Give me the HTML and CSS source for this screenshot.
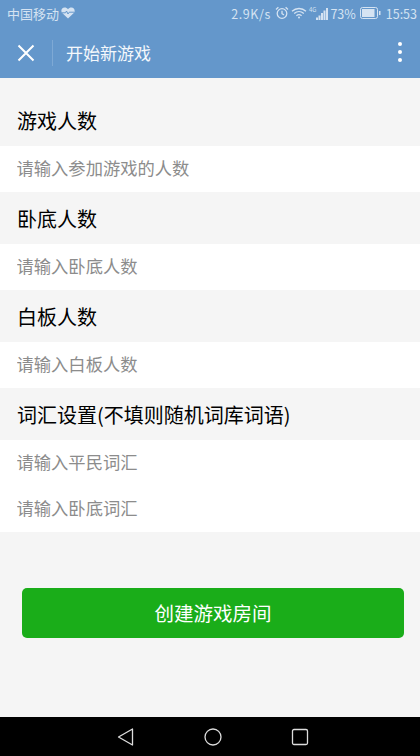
FILE: index.html
```html
<!DOCTYPE html>
<html lang="zh-CN">
<head>
<meta charset="UTF-8">
<meta name="viewport" content="width=device-width, initial-scale=1.0">
<title>开始新游戏</title>
<link rel="stylesheet" href="styles.css">
</head>
<body>

<!-- Header with status bar -->
<div class="header">
    <div class="status-bar">
        <div class="status-left">
            <span>中国移动</span>
            <svg class="heart" viewBox="0 0 14 12" width="14" height="12"><path d="M7 11.500 1.200 6C-.6 4 .6.6 3.600.6 5 .6 6.200 1.300 7 2.300 7.800 1.300 9 .6 10.400.6c3 0 4.200 3.400 2.400 5.400Z" fill="#d5e3f2"/><path d="M1 5.800h3.500l1-1.800 1.500 3 1.200-1.800h4.800" fill="none" stroke="#6497cb" stroke-width="1"/></svg>
        </div>
        <div class="status-right">
            <span class="speed">2.9K/s</span>
            <svg class="alarm" viewBox="0 0 14 14" width="14" height="14" fill="none" stroke="#d5e3f2" stroke-width="1.300"><circle cx="7" cy="7.500" r="4.800"/><path d="M7 4.800v2.900l2 1.200M1 3.400 3.400 1.200M13 3.400 10.600 1.200"/></svg>
            <svg class="wifi" viewBox="0 0 16 12" width="16" height="12" fill="none" stroke="#d5e3f2" stroke-width="1.300"><path d="M1 4.200c4-3.600 10-3.600 14 0M3.200 6.500c2.800-2.400 6.800-2.400 9.600 0M5.400 8.700c1.500-1.200 3.700-1.200 5.200 0"/><circle cx="8" cy="10.500" r="1" fill="#d5e3f2" stroke="none"/></svg>
            <div class="signal">
                <span class="net">4G</span>
                <svg viewBox="0 0 12 12" width="12" height="12" fill="#d5e3f2"><rect x="0" y="9.500" width="2" height="2.500"/><rect x="2.500" y="7.500" width="2" height="4.500"/><rect x="5" y="5" width="2" height="7"/><rect x="7.500" y="2.500" width="2" height="9.500"/><rect x="10" y="0" width="2" height="12"/></svg>
            </div>
            <span class="percent">73%</span>
            <svg class="battery" viewBox="0 0 21 12" width="21" height="12"><rect x=".5" y=".5" width="17" height="11" rx="2" fill="none" stroke="#d5e3f2"/><rect x="2" y="2" width="12.500" height="8" fill="#d5e3f2"/><rect x="19" y="4" width="1.500" height="4" fill="#d5e3f2"/></svg>
            <span class="clock">15:53</span>
        </div>
    </div>
    <div class="title-bar">
        <svg class="close" viewBox="0 0 18 18" width="18" height="18" fill="none" stroke="#fff" stroke-width="2"><path d="M1.500 1.500l15 15M16.500 1.500l-15 15"/></svg>
        <div class="divider"></div>
        <div class="title">开始新游戏</div>
        <div class="more"><i></i><i></i><i></i></div>
    </div>
</div>

<!-- Form -->
<div class="form">
    <h3 class="first">游戏人数</h3>
    <div class="group"><input type="text" placeholder="请输入参加游戏的人数"></div>
    <h3>卧底人数</h3>
    <div class="group"><input type="text" placeholder="请输入卧底人数"></div>
    <h3>白板人数</h3>
    <div class="group"><input type="text" placeholder="请输入白板人数"></div>
    <h3>词汇设置(不填则随机词库词语)</h3>
    <div class="group">
        <input type="text" placeholder="请输入平民词汇">
        <input type="text" placeholder="请输入卧底词汇">
    </div>
</div>

<button class="create-button">创建游戏房间</button>

<!-- Android nav bar -->
<div class="nav-bar">
    <svg viewBox="0 0 18 18" width="18" height="18" fill="none" stroke="#ddd" stroke-width="1.300"><path d="M15.500 1 1.500 9l14 8Z" stroke-linejoin="round"/></svg>
    <svg viewBox="0 0 18 18" width="18" height="18" fill="none" stroke="#ddd" stroke-width="1.300"><circle cx="9" cy="9" r="8"/></svg>
    <svg viewBox="0 0 18 18" width="18" height="18" fill="none" stroke="#ddd" stroke-width="1.300"><rect x="1.500" y="1.500" width="15" height="15" rx="1.500"/></svg>
</div>

</body>
</html>
```

FILE: styles.css
```css
* {
    box-sizing: border-box;
    margin: 0;
    padding: 0;
    font-family: "Noto Sans CJK SC", "Liberation Sans", sans-serif;
}

body {
    width: 420px;
    height: 756px;
    background-color: #f5f5f5;
    display: flex;
    flex-direction: column;
    overflow: hidden;
}

.header {
    height: 78px;
    background-color: #6497cb;
}

.status-bar {
    height: 28px;
    display: flex;
    justify-content: space-between;
    align-items: center;
    padding: 0 3px 2px 7px;
    color: #d5e3f2;
    font-size: 13px;
}

.status-left,
.status-right {
    display: flex;
    align-items: center;
}

.status-left {
    gap: 2px;
}

.status-right {
    font-family: Roboto, sans-serif;
    font-size: 12.500px;
}

.speed {
    letter-spacing: 0.6px;
}

.alarm {
    margin-left: 4px;
}

.wifi {
    margin-left: 2px;
}

.signal {
    display: flex;
    align-items: flex-end;
    height: 14px;
    margin-left: 2px;
}

.net {
    font-size: 6px;
    line-height: 8px;
    align-self: flex-start;
}

.percent {
    margin-left: 2px;
}

.battery {
    margin-left: 4px;
}

.clock {
    margin-left: 5px;
}

.title-bar {
    height: 50px;
    display: flex;
    align-items: center;
    padding-left: 17px;
}

.divider {
    width: 1px;
    height: 26px;
    margin-left: 17px;
    background-color: #7ea9d5;
}

.title {
    margin-left: 13px;
    padding-bottom: 2px;
    color: #f4f8fc;
    font-size: 17px;
}

.more {
    margin: 0 18px 2px auto;
    display: flex;
    flex-direction: column;
    gap: 4px;
}

.more i {
    display: block;
    width: 4px;
    height: 4px;
    border-radius: 50%;
    background-color: #fff;
}

.form h3 {
    height: 52px;
    padding-left: 17px;
    display: flex;
    align-items: center;
    color: #000;
    font-size: 20px;
    font-weight: normal;
}

.form h3.first {
    height: 68px;
    padding-top: 16px;
}

.group {
    background-color: #fff;
}

.group input {
    display: block;
    width: 100%;
    height: 46px;
    padding: 0 0 3px 16.500px;
    border: none;
    outline: none;
    background: transparent;
    font-size: 17.300px;
}

.group input::placeholder {
    color: #8c8c8c;
    opacity: 1;
}

.create-button {
    width: 382px;
    height: 50px;
    margin: 56px 0 0 22px;
    padding-bottom: 2px;
    border: none;
    border-radius: 5px;
    background-color: #1aad19;
    color: #fff;
    font-size: 19.500px;
}

.nav-bar {
    margin-top: auto;
    height: 39px;
    padding-left: 6px;
    background-color: #000;
    display: flex;
    align-items: center;
    justify-content: center;
    gap: 69px;
}
```
